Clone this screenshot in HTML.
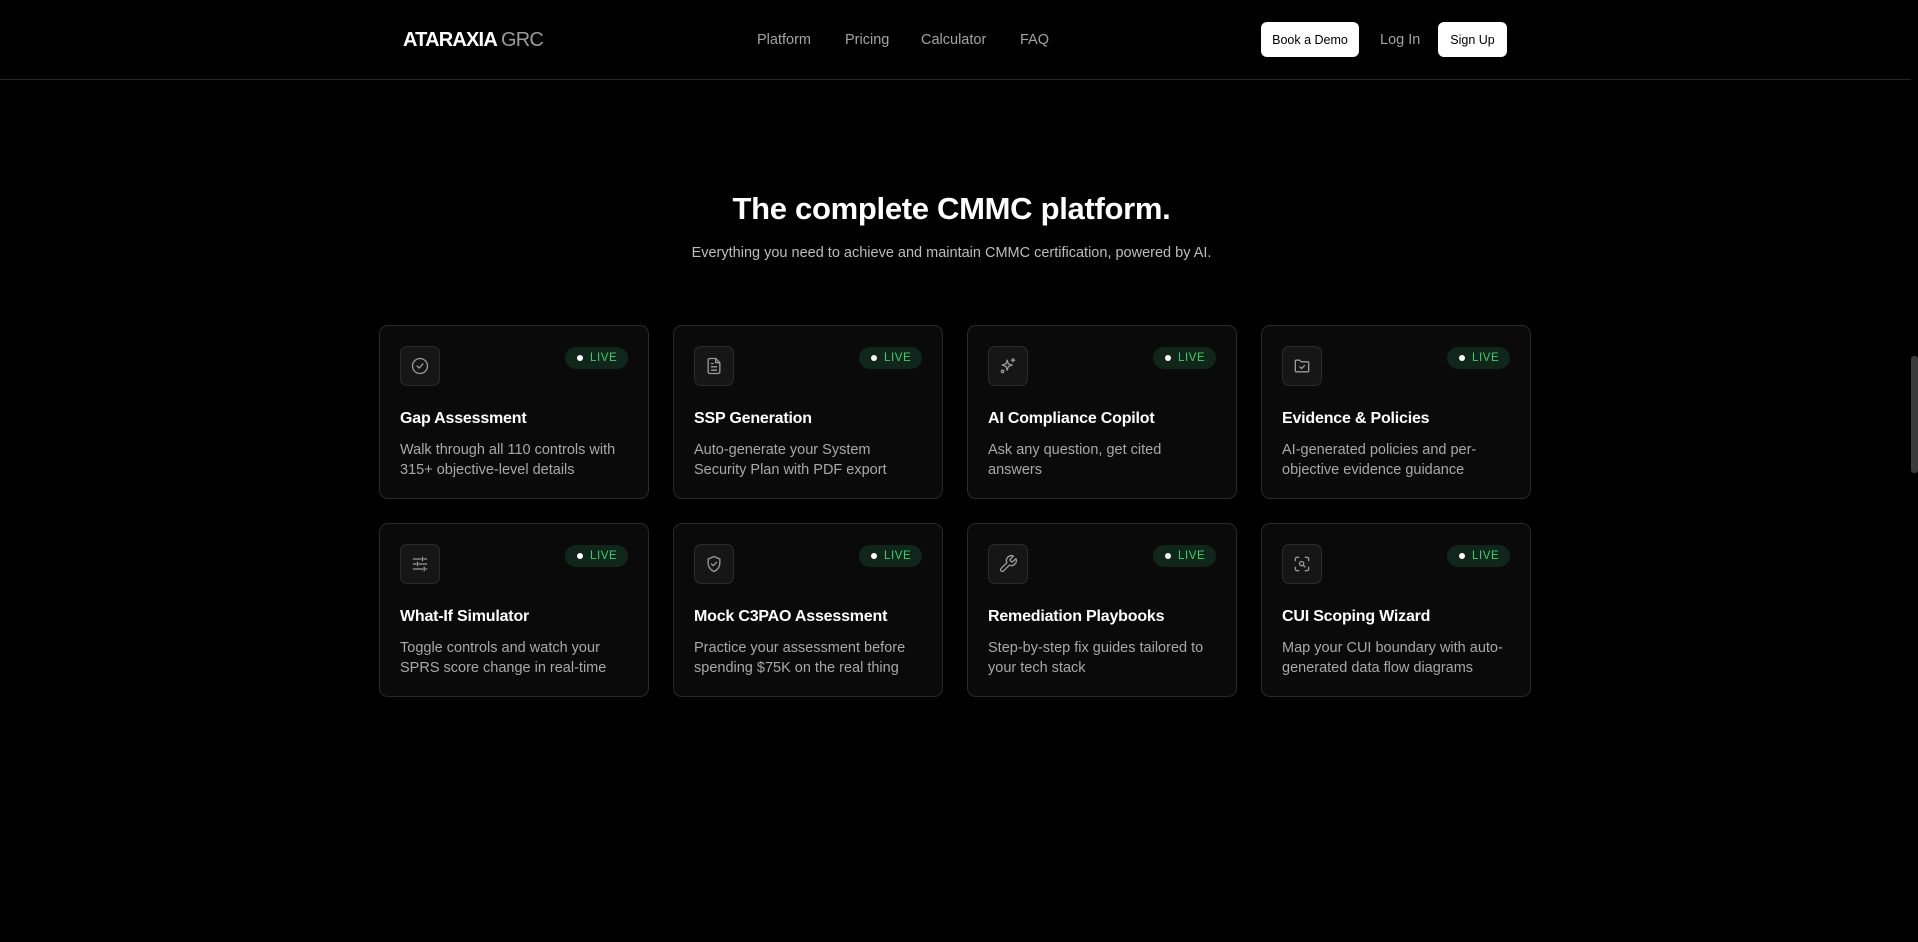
<!DOCTYPE html>
<html><head><meta charset="utf-8"><style>
*{box-sizing:border-box;margin:0;padding:0}
html,body{width:1918px;height:942px;overflow:hidden;background:#000;font-family:"Liberation Sans",sans-serif;color:#fff}
.hdr{position:absolute;left:0;top:0;width:1911px;height:80px;border-bottom:1px solid #262626}
.logo{position:absolute;left:403px;top:29px;font-size:20px;font-weight:700;letter-spacing:-0.8px}
.logo span{color:#9a9a9a;font-weight:400}
.nav{position:absolute;top:32px;font-size:14.5px;color:#a3a3a3}
.btn{position:absolute;top:22px;height:35px;background:#fff;color:#000;border-radius:6px;font-size:12.5px;display:flex;align-items:center;justify-content:center}
h1{position:absolute;left:0;width:1903px;text-align:center;top:191px;font-size:31px;font-weight:700;letter-spacing:-0.3px}
.sub{position:absolute;left:0;width:1903px;text-align:center;top:245px;font-size:14.5px;color:#bdbdbd}
.card{position:absolute;width:270px;height:174px;background:#0a0a0a;border:1px solid #2a2a2a;border-radius:9px}
.ic{position:absolute;left:20px;top:20px;width:40px;height:40px;background:#161616;border:1px solid #2c2c2c;border-radius:7px;display:flex;align-items:center;justify-content:center}
.live{position:absolute;left:185px;top:21px;width:63px;height:22px;background:#10261a;border-radius:11px;color:#3ccf6d;font-size:11.5px;letter-spacing:0.6px;line-height:22px;padding-left:25px}
.live:before{content:"";position:absolute;left:12px;top:8px;width:6px;height:6px;border-radius:50%;background:#fff}
.t{position:absolute;left:20px;top:84px;font-size:16px;font-weight:700;letter-spacing:-0.2px}
.d{position:absolute;left:20px;top:114px;width:222px;font-size:14.5px;line-height:20px;color:#a8a8a8}
.sb{position:absolute;left:1911px;top:356px;width:7px;height:117px;background:#3a3a3a;border-radius:3px}
svg{width:20px;height:20px;fill:none;stroke:#9a9a9a;stroke-width:1.6;stroke-linecap:round;stroke-linejoin:round}
</style></head><body>
<div class="hdr">
<div class="logo">ATARAXIA <span>GRC</span></div>
<div class="nav" style="left:757px">Platform</div>
<div class="nav" style="left:845px">Pricing</div>
<div class="nav" style="left:921px">Calculator</div>
<div class="nav" style="left:1020px">FAQ</div>
<div class="btn" style="left:1261px;width:98px">Book a Demo</div>
<div class="nav" style="left:1380px">Log In</div>
<div class="btn" style="left:1438px;width:69px">Sign Up</div>
</div>
<div class="sb"></div>
<h1>The complete CMMC platform.</h1>
<div class="sub">Everything you need to achieve and maintain CMMC certification, powered by AI.</div>

<div class="card" style="left:379px;top:325px"><div class="ic"><svg viewBox="0 0 24 24"><circle cx="12" cy="12" r="9"/><path d="M8.5 12l2.5 2.5 4.5-5"/></svg></div><div class="live">LIVE</div><div class="t">Gap Assessment</div><div class="d">Walk through all 110 controls with 315+ objective-level details</div></div>
<div class="card" style="left:673px;top:325px"><div class="ic"><svg viewBox="0 0 24 24"><path d="M14 3H7a2 2 0 0 0-2 2v14a2 2 0 0 0 2 2h10a2 2 0 0 0 2-2V8z"/><path d="M14 3v5h5M9 13h6M9 17h6M9 9h2"/></svg></div><div class="live">LIVE</div><div class="t">SSP Generation</div><div class="d">Auto-generate your System Security Plan with PDF export</div></div>
<div class="card" style="left:967px;top:325px"><div class="ic"><svg viewBox="0 0 24 24"><path d="M11 5l1.5 4.5L17 11l-4.5 1.5L11 17l-1.5-4.5L5 11l4.5-1.5z"/><path d="M18 3v4M16 5h4"/><circle cx="5.5" cy="18.5" r="1.5"/></svg></div><div class="live">LIVE</div><div class="t">AI Compliance Copilot</div><div class="d">Ask any question, get cited answers</div></div>
<div class="card" style="left:1261px;top:325px"><div class="ic"><svg viewBox="0 0 24 24"><path d="M4 6a1 1 0 0 1 1-1h4l2 2h8a1 1 0 0 1 1 1v10a1 1 0 0 1-1 1H5a1 1 0 0 1-1-1z"/><path d="M9.5 13l2 2 3.5-3.5"/></svg></div><div class="live">LIVE</div><div class="t">Evidence &amp; Policies</div><div class="d">AI-generated policies and per-objective evidence guidance</div></div>

<div class="card" style="left:379px;top:523px"><div class="ic"><svg viewBox="0 0 24 24"><path d="M4 6h9M17 6h3M4 12h3M11 12h9M4 18h11M19 18h1M15 4v4M9 10v4M17 16v4"/></svg></div><div class="live">LIVE</div><div class="t">What-If Simulator</div><div class="d">Toggle controls and watch your SPRS score change in real-time</div></div>
<div class="card" style="left:673px;top:523px"><div class="ic"><svg viewBox="0 0 24 24"><path d="M12 3l7 3v5c0 5-3.5 8.5-7 10-3.5-1.5-7-5-7-10V6z"/><path d="M9 12l2 2 4-4"/></svg></div><div class="live">LIVE</div><div class="t">Mock C3PAO Assessment</div><div class="d">Practice your assessment before spending $75K on the real thing</div></div>
<div class="card" style="left:967px;top:523px"><div class="ic"><svg viewBox="0 0 24 24"><path d="M14.7 6.3a1 1 0 0 0 0 1.4l1.6 1.6a1 1 0 0 0 1.4 0l3.8-3.8a6 6 0 0 1-7.9 7.9l-6.9 6.9a2.1 2.1 0 0 1-3-3l6.9-6.9a6 6 0 0 1 7.9-7.9z"/></svg></div><div class="live">LIVE</div><div class="t">Remediation Playbooks</div><div class="d">Step-by-step fix guides tailored to your tech stack</div></div>
<div class="card" style="left:1261px;top:523px"><div class="ic"><svg viewBox="0 0 24 24"><path d="M4 8V6a2 2 0 0 1 2-2h2M16 4h2a2 2 0 0 1 2 2v2M20 16v2a2 2 0 0 1-2 2h-2M8 20H6a2 2 0 0 1-2-2v-2"/><circle cx="11.5" cy="11.5" r="2.5"/><path d="M13.5 13.5l2 2"/></svg></div><div class="live">LIVE</div><div class="t">CUI Scoping Wizard</div><div class="d">Map your CUI boundary with auto-generated data flow diagrams</div></div>
</body></html>
